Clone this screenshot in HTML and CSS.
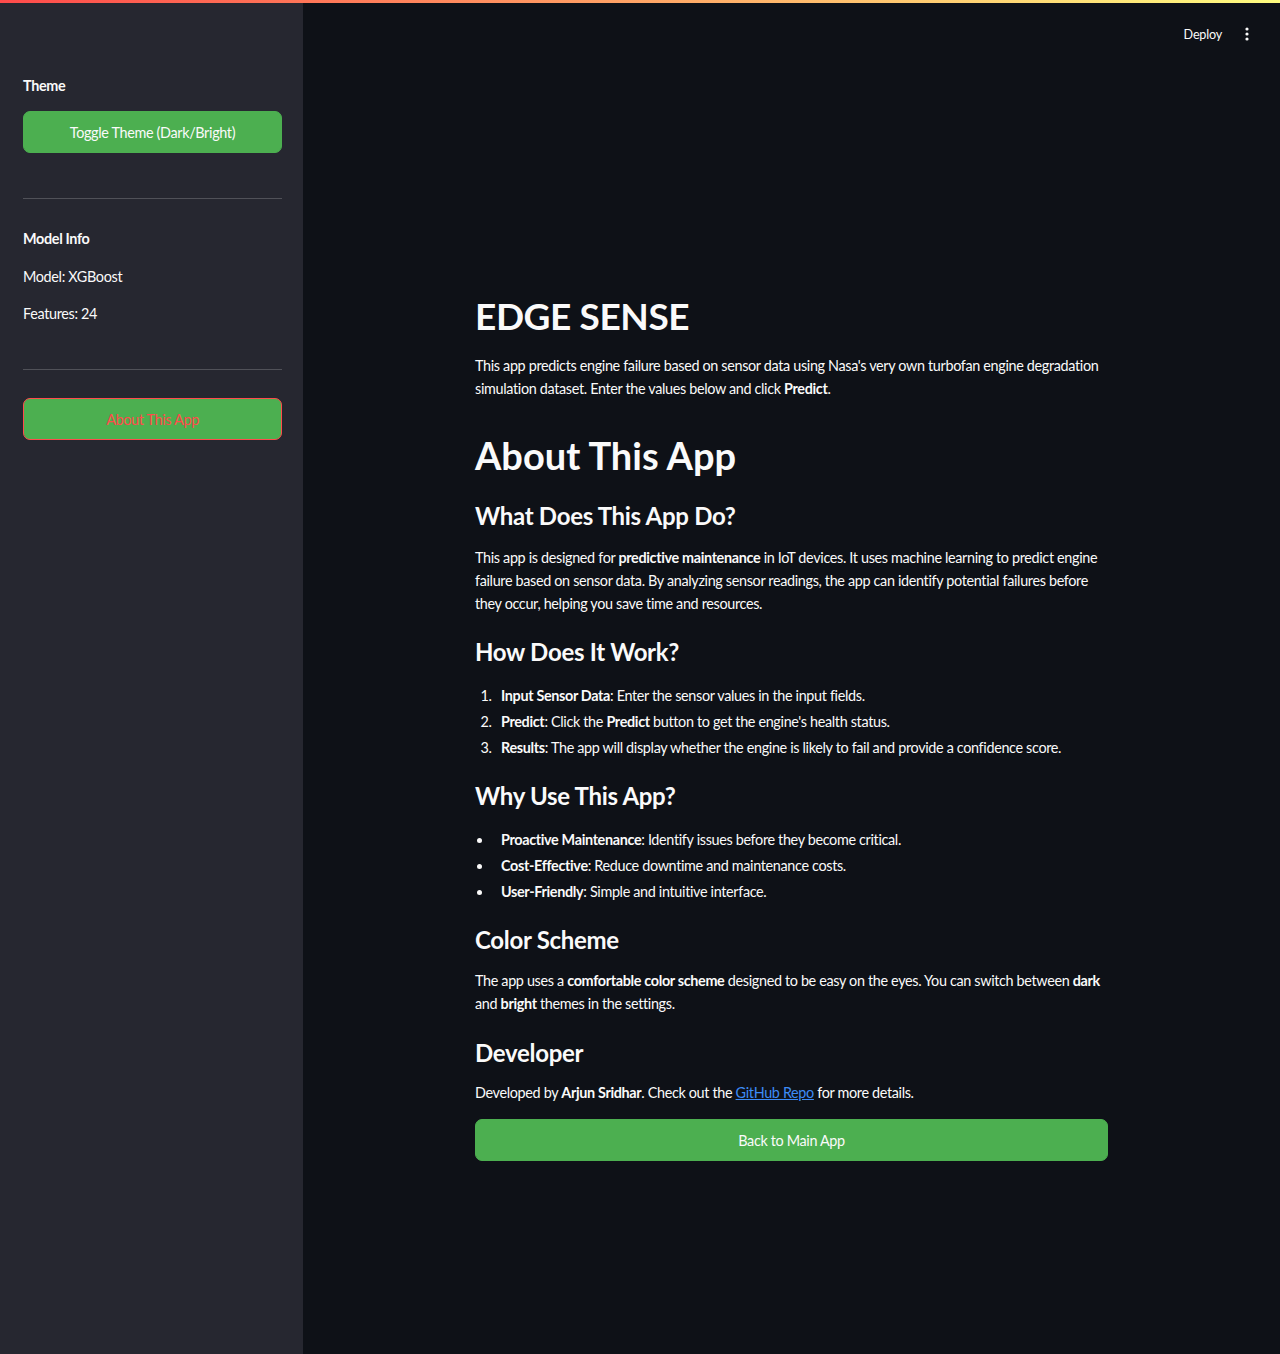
FILE: index.html
```html
<!DOCTYPE html>
<html lang="en">
<head>
<meta charset="utf-8">
<title>EDGE SENSE</title>
<link rel="stylesheet" href="styles.css">
</head>
<body>
<div class="decoration"></div>
<div class="app">
  <aside class="sidebar">
    <p class="sb-label sb-theme">Theme</p>
    <button class="btn sb-btn">Toggle Theme (Dark/Bright)</button>
    <hr class="sb-hr sb-hr1">
    <p class="sb-label sb-model">Model Info</p>
    <p class="sb-text sb-xg">Model: XGBoost</p>
    <p class="sb-text sb-feat">Features: 24</p>
    <hr class="sb-hr sb-hr2">
    <button class="btn sb-btn btn-active">About This App</button>
  </aside>
  <main class="main">
    <header class="toolbar">
      <span class="deploy">Deploy</span>
      <svg class="kebab" width="4" height="14" viewBox="0 0 4 14"><circle cx="2" cy="2" r="1.6" fill="#fafafa"/><circle cx="2" cy="7" r="1.6" fill="#fafafa"/><circle cx="2" cy="12" r="1.6" fill="#fafafa"/></svg>
    </header>
    <div class="content">
      <h1 class="title">EDGE SENSE</h1>
      <p class="intro">This app predicts engine failure based on sensor data using Nasa's very own turbofan engine degradation simulation dataset. Enter the values below and click <b>Predict</b>.</p>
      <h1 class="about">About This App</h1>
      <h3 class="h-what">What Does This App Do?</h3>
      <p class="p-what">This app is designed for <b>predictive maintenance</b> in IoT devices. It uses machine learning to predict engine failure based on sensor data. By analyzing sensor readings, the app can identify potential failures before they occur, helping you save time and resources.</p>
      <h3 class="h-how">How Does It Work?</h3>
      <ol class="list list-how">
        <li><b>Input Sensor Data</b>: Enter the sensor values in the input fields.</li>
        <li><b>Predict</b>: Click the <b>Predict</b> button to get the engine's health status.</li>
        <li><b>Results</b>: The app will display whether the engine is likely to fail and provide a confidence score.</li>
      </ol>
      <h3 class="h-why">Why Use This App?</h3>
      <ul class="list list-why">
        <li><b>Proactive Maintenance</b>: Identify issues before they become critical.</li>
        <li><b>Cost-Effective</b>: Reduce downtime and maintenance costs.</li>
        <li><b>User-Friendly</b>: Simple and intuitive interface.</li>
      </ul>
      <h3 class="h-color">Color Scheme</h3>
      <p class="p-color">The app uses a <b>comfortable color scheme</b> designed to be easy on the eyes. You can switch between <b>dark</b> and <b>bright</b> themes in the settings.</p>
      <h3 class="h-dev">Developer</h3>
      <p class="p-dev">Developed by <b>Arjun Sridhar</b>. Check out the <a href="#">GitHub Repo</a> for more details.</p>
      <button class="btn main-btn">Back to Main App</button>
    </div>
  </main>
</div>
</body>
</html>
```
FILE: styles.css
```css
* { box-sizing: border-box; }
html, body { margin: 0; padding: 0; }
body {
  background: #0e1117;
  color: #fafafa;
  font-family: Lato, "Noto Sans", sans-serif;
  font-size: 14.4px;
  line-height: 23px;
  letter-spacing: -0.34px;
  min-height: 1354px;
}
b { font-weight: 700; }
.decoration {
  height: 3px;
  background: linear-gradient(90deg, #ff4b4b, #fffd80);
}
.app {
  display: flex;
  min-height: 1351px;
}
.sidebar {
  width: 303px;
  flex: 0 0 303px;
  background: #262730;
  padding: 71px 21px 0 23px;
  display: flex;
  flex-direction: column;
}
.sidebar p { margin: 0; }
.sb-label { font-weight: 700; }
.btn {
  display: block;
  width: 100%;
  height: 42px;
  background: #4caf50;
  color: #fafafa;
  border: 1px solid #4caf50;
  border-radius: 7px;
  font-family: inherit;
  font-size: 14.4px;
  letter-spacing: -0.34px;
  cursor: pointer;
}
.sb-btn { margin-top: 14px; }
.btn-active { color: #ff4b4b; border-color: #ff4b4b; }
.sb-hr {
  border: none;
  height: 1px;
  background: rgba(250, 250, 250, 0.2);
  margin: 0;
}
.sb-hr1 { margin-top: 45px; }
.sb-model { margin-top: 28px !important; }
.sb-xg { margin-top: 15px !important; }
.sb-feat { margin-top: 14px !important; }
.sb-hr2 { margin-top: 44px; }
.sb-hr2 + .sb-btn { margin-top: 28px; }

.main {
  flex: 1;
  display: flex;
  flex-direction: column;
}
.toolbar {
  height: 62px;
  display: flex;
  align-items: center;
  justify-content: flex-end;
  padding-right: 31px;
  gap: 23px;
}
.deploy { font-size: 12.6px; letter-spacing: -0.2px; }
.kebab { display: block; }
.content {
  width: 633px;
  margin: 0 auto;
  padding-top: 227px;
  padding-bottom: 100px;
}
h1, h3, p, ol, ul { margin: 0; }
h1 {
  font-size: 38px;
  line-height: 48px;
  font-weight: 700;
  letter-spacing: 0;
}
.title { font-size: 37px; letter-spacing: -0.4px; }
h3 {
  font-size: 24px;
  line-height: 30px;
  font-weight: 700;
  letter-spacing: -0.3px;
}
.intro { margin-top: 14px; }
.about { margin-top: 31px; }
.h-what { margin-top: 22px; }
.p-what { margin-top: 15px; }
.h-how { margin-top: 22px; }
.list-how { margin-top: 17px; }
.h-why { margin-top: 22px; }
.list-why { margin-top: 17px; }
.h-color { margin-top: 22px; }
.p-color { margin-top: 14px; }
.h-dev { margin-top: 23px; }
.p-dev { margin-top: 13px; }
.list-how { padding-left: 20px; }
.list-how li { padding-left: 6px; }
.list-why { padding-left: 18px; }
.list-why li { padding-left: 8px; }
.list li { margin-bottom: 3px; }
.list li:last-child { margin-bottom: 0; }
a { color: #3d8bf5; text-decoration: underline; }
.main-btn { margin-top: 15px; }
```
